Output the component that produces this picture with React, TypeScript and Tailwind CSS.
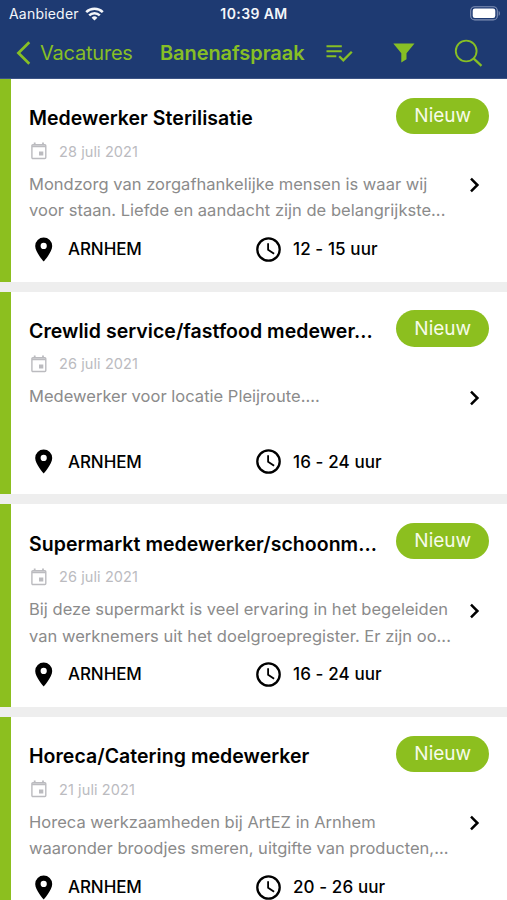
type Job = {
  title: string;
  date: string;
  lines: string[];
  city: string;
  hours: string;
};

const jobs: Job[] = [
  {
    title: "Medewerker Sterilisatie",
    date: "28 juli 2021",
    lines: ["Mondzorg van zorgafhankelijke mensen is waar wij", "voor staan. Liefde en aandacht zijn de belangrijkste..."],
    city: "ARNHEM",
    hours: "12 - 15 uur",
  },
  {
    title: "Crewlid service/fastfood medewer...",
    date: "26 juli 2021",
    lines: ["Medewerker voor locatie Pleijroute...."],
    city: "ARNHEM",
    hours: "16 - 24 uur",
  },
  {
    title: "Supermarkt medewerker/schoonm...",
    date: "26 juli 2021",
    lines: ["Bij deze supermarkt is veel ervaring in het begeleiden", "van werknemers uit het doelgroepregister. Er zijn oo..."],
    city: "ARNHEM",
    hours: "16 - 24 uur",
  },
  {
    title: "Horeca/Catering medewerker",
    date: "21 juli 2021",
    lines: ["Horeca werkzaamheden bij ArtEZ in Arnhem", "waaronder broodjes smeren, uitgifte van producten,..."],
    city: "ARNHEM",
    hours: "20 - 26 uur",
  },
];

function StatusBar() {
  return (
    <div className="grid h-[27px] grid-cols-3 items-center pl-[9px] pr-[6px] text-[#f4f6fa]">
      <div className="flex items-center gap-[6px]">
        <span className="text-[14px] tracking-[0.2px]">Aanbieder</span>
        <svg width="19" height="14" viewBox="0 0 19 14" fill="none" stroke="currentColor" strokeWidth="2.5">
          <path d="M1.2 5.2a11.8 11.8 0 0 1 16.6 0" />
          <path d="M4.2 8.4a7.5 7.5 0 0 1 10.6 0" />
          <path d="M9.5 13.6 6.6 10.7a4.1 4.1 0 0 1 5.8 0z" fill="currentColor" stroke="none" />
        </svg>
      </div>
      <span className="pr-[2px] text-center text-[14px] font-semibold tracking-[0.4px]">10:39 AM</span>
      <svg className="justify-self-end" width="31" height="15" viewBox="0 0 31 15">
        <rect x="0.7" y="0.7" width="26.6" height="13.2" rx="4" fill="none" stroke="#8191b6" strokeWidth="1.1" />
        <rect x="2.7" y="2.6" width="22.6" height="9.4" rx="2.2" fill="#fff" />
        <path d="M28.7 5c1.5.6 1.5 4.2 0 4.8z" fill="#8191b6" />
      </svg>
    </div>
  );
}

function NavBar() {
  return (
    <div className="flex h-[51px] items-center pl-[16px] text-[#87bf25]">
      <svg width="15" height="24" viewBox="0 0 15 24" fill="none" stroke="currentColor" strokeWidth="2.7">
        <path d="M13.3 1.3 2.4 12l10.9 10.7" />
      </svg>
      <span className="ml-[9px] w-[120px] whitespace-nowrap text-[20px] tracking-[-0.22px]">Vacatures</span>
      <span className="w-[164px] whitespace-nowrap text-[20px] font-semibold tracking-[-0.07px]">Banenafspraak</span>
      <svg className="ml-[2px]" width="27" height="18" viewBox="0 0 27 18" fill="none" stroke="currentColor" strokeWidth="2">
        <path d="M.5 2.2h15.3M.5 7.2h15.3M.5 12.2h9.8" />
        <path d="m13.2 12.3 4.1 4 8.5-8.600" strokeWidth="2.3" />
      </svg>
      <svg className="ml-[40px]" width="22" height="20" viewBox="0 0 22 20" fill="currentColor">
        <path d="M.3.5h21.2l-8 9.7v6.1l-5.2 3.2v-9.3z" />
      </svg>
      <svg className="ml-[39px]" width="29" height="28" viewBox="0 0 29 28" fill="none" stroke="currentColor" strokeWidth="1.9">
        <circle cx="12.2" cy="12" r="10.4" />
        <path d="m19.5 19.4 8 7.4" strokeWidth="2.3" />
      </svg>
    </div>
  );
}

function JobCard({ job }: { job: Job }) {
  return (
    <article className="flex h-[202.7px] shrink-0 bg-white">
      <div className="w-[11px] shrink-0 bg-[#8cbf1f]" />
      <div className="min-w-0 flex-1 pl-[18px] pr-[18.5px] pt-[18.5px]">
        <div className="flex h-[36.5px] items-center justify-between">
          <h2 className="whitespace-nowrap pt-[6px] text-[19.5px] font-semibold tracking-[0.04px] text-black">{job.title}</h2>
          <span className="flex h-full w-[92.5px] items-center justify-center rounded-full bg-[#8cbf1f] pl-[1px] pt-[1px] text-[19px] text-[#f7fbe9]">
            Nieuw
          </span>
        </div>
        <div className="flex h-[36.8px] items-center pb-[2px] text-[#bbbbbf]">
          <svg className="ml-[2px]" width="16" height="18" viewBox="0 0 16 18" fill="none" stroke="currentColor" strokeWidth="1.4">
            <rect x=".9" y="2.7" width="13.9" height="13.8" rx="1" />
            <path d="M1 4.3h13.7M3.7.6v2M12 .6v2" strokeWidth="1.8" />
            <path d="M8 9.5h4.3v4H8z" fill="currentColor" stroke="none" />
          </svg>
          <span className="ml-[12px] text-[14.5px] tracking-[0.1px]">{job.date}</span>
        </div>
        <div className="flex h-[53px] items-center">
          <div className="h-full flex-1 whitespace-nowrap text-[16.5px] leading-[26.5px] tracking-[0.02px] text-[#8b8b8b]">
            {job.lines.map((line) => (
              <p key={line}>{line}</p>
            ))}
          </div>
          <svg className="mb-[24px] mr-[9px]" width="11" height="16" viewBox="0 0 11 16" fill="none" stroke="#000" strokeWidth="2.5">
            <path d="m2 1.7 6.400 6.3L2 14.3" />
          </svg>
        </div>
        <div className="flex h-[51px] items-center text-[17px] font-medium text-black">
          <svg className="ml-[6px]" width="18" height="25" viewBox="0 0 18 25">
            <path
              d="M8.7.5A8.5 8.5 0 0 0 .2 9c0 6.1 8.5 15.5 8.5 15.5S17.2 15.1 17.2 9A8.5 8.5 0 0 0 8.7.5Zm0 11.5a3.100 3.1 0 1 1 0-6.200 3.1 3.1 0 0 1 0 6.200Z"
              fill="currentColor"
            />
          </svg>
          <span className="ml-[15px] w-[188px] pt-[1px] tracking-[-0.1px]">{job.city}</span>
          <svg width="25" height="25" viewBox="0 0 25 25" fill="none" stroke="currentColor">
            <circle cx="12.5" cy="12.5" r="11.2" strokeWidth="2.3" />
            <path d="M12.1 6.2v6.6l6 4" strokeWidth="1.8" />
          </svg>
          <span className="ml-[12px] pt-[1px] tracking-[0.1px]">{job.hours}</span>
        </div>
      </div>
    </article>
  );
}

export default function App() {
  return (
    <div className="flex h-[900px] w-[507px] flex-col overflow-hidden bg-[#eeeeee] font-['Inter','Liberation_Sans',sans-serif]">
      <header className="h-[79px] shrink-0 border-b border-[#3d5485] bg-[#1e3a72]">
        <StatusBar />
        <NavBar />
      </header>
      <main className="flex flex-col gap-[10px]">
        {jobs.map((job) => (
          <JobCard key={job.title} job={job} />
        ))}
      </main>
    </div>
  );
}
